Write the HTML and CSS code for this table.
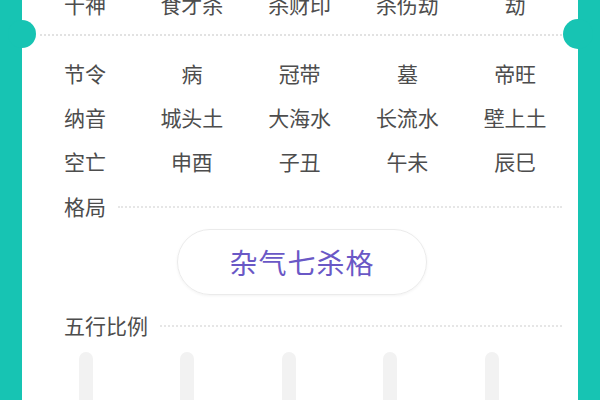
FILE: index.html
```html
<!DOCTYPE html>
<html lang="zh">
<head>
<meta charset="utf-8">
<link rel="stylesheet" href="styles.css">
</head>
<body>
<div class="card">
  <div class="row first">
    <span class="label">十神</span><span>食才杀</span><span>杀财印</span><span>杀伤劫</span><span>劫</span>
  </div>
  <div class="divider"></div>
  <div class="row second">
    <span class="label">节令</span><span>病</span><span>冠带</span><span>墓</span><span>帝旺</span>
  </div>
  <div class="row">
    <span class="label">纳音</span><span>城头土</span><span>大海水</span><span>长流水</span><span>壁上土</span>
  </div>
  <div class="row">
    <span class="label">空亡</span><span>申酉</span><span>子丑</span><span>午未</span><span>辰巳</span>
  </div>
  <div class="section">
    <span class="label">格局</span><span class="dots"></span>
  </div>
  <div class="pill-wrap">
    <div class="pill">杂气七杀格</div>
  </div>
  <div class="section ratio">
    <span class="label">五行比例</span><span class="dots"></span>
  </div>
  <div class="bars">
    <span class="bar"></span><span class="bar"></span><span class="bar"></span><span class="bar"></span><span class="bar"></span>
  </div>
</div>
</body>
</html>
```
FILE: styles.css
```css
html, body {
  margin: 0;
  padding: 0;
  width: 600px;
  height: 400px;
  overflow: hidden;
  background: #17c4b3;
  font-family: "Noto Sans CJK SC", "Noto Sans", sans-serif;
}

.card {
  position: relative;
  margin: 0 22px;
  height: 400px;
  background: #ffffff;
  display: flex;
  flex-direction: column;
  color: #4d4d4d;
}

.card > * {
  flex-shrink: 0;
}

.card::before,
.card::after {
  content: "";
  position: absolute;
  top: 20px;
  width: 28px;
  height: 28px;
  border-radius: 50%;
  background: #17c4b3;
}

.card::before {
  left: -14px;
}

.card::after {
  top: 19px;
  width: 30px;
  height: 30px;
  right: -15px;
}

.row {
  display: grid;
  grid-template-columns: 74px repeat(4, 107.75px);
  padding-left: 42px;
  height: 44px;
  line-height: 44px;
  font-size: 21px;
  justify-items: center;
}

.row .label {
  justify-self: start;
}

.row.first {
  margin-top: -18px;
}

.divider {
  margin: 8px 16px 0 18px;
  border-top: 2px dotted #e2e2e2;
}

.row.second {
  margin-top: 15px;
}

.section {
  display: flex;
  align-items: center;
  gap: 12px;
  padding: 0 16px 0 42px;
  height: 44px;
  line-height: 44px;
  margin-top: 1px;
  font-size: 21px;
}

.section .dots {
  flex: 1;
  border-top: 2px dotted #e6e6e6;
  margin-top: 2px;
}

.pill-wrap {
  display: flex;
  justify-content: center;
  padding-left: 4px;
  margin-top: 1px;
}

.pill {
  width: 248px;
  height: 64px;
  border: 1px solid #ebebeb;
  border-radius: 33px;
  box-shadow: 0 1px 3px rgba(0, 0, 0, 0.05);
  display: flex;
  align-items: center;
  justify-content: center;
  font-size: 28px;
  color: #6a58c6;
  letter-spacing: 1px;
}

.section.ratio {
  margin-top: 8px;
}

.bars {
  flex: 1 1 auto;
  min-height: 0;
  overflow: hidden;
  display: grid;
  grid-template-columns: repeat(5, 101.5px);
  justify-items: center;
  padding: 0 35px 0 13px;
  margin-top: 5px;
}

.bar {
  width: 14px;
  height: 100%;
  border-radius: 7px 7px 0 0;
  background: #f2f2f2;
}
```
